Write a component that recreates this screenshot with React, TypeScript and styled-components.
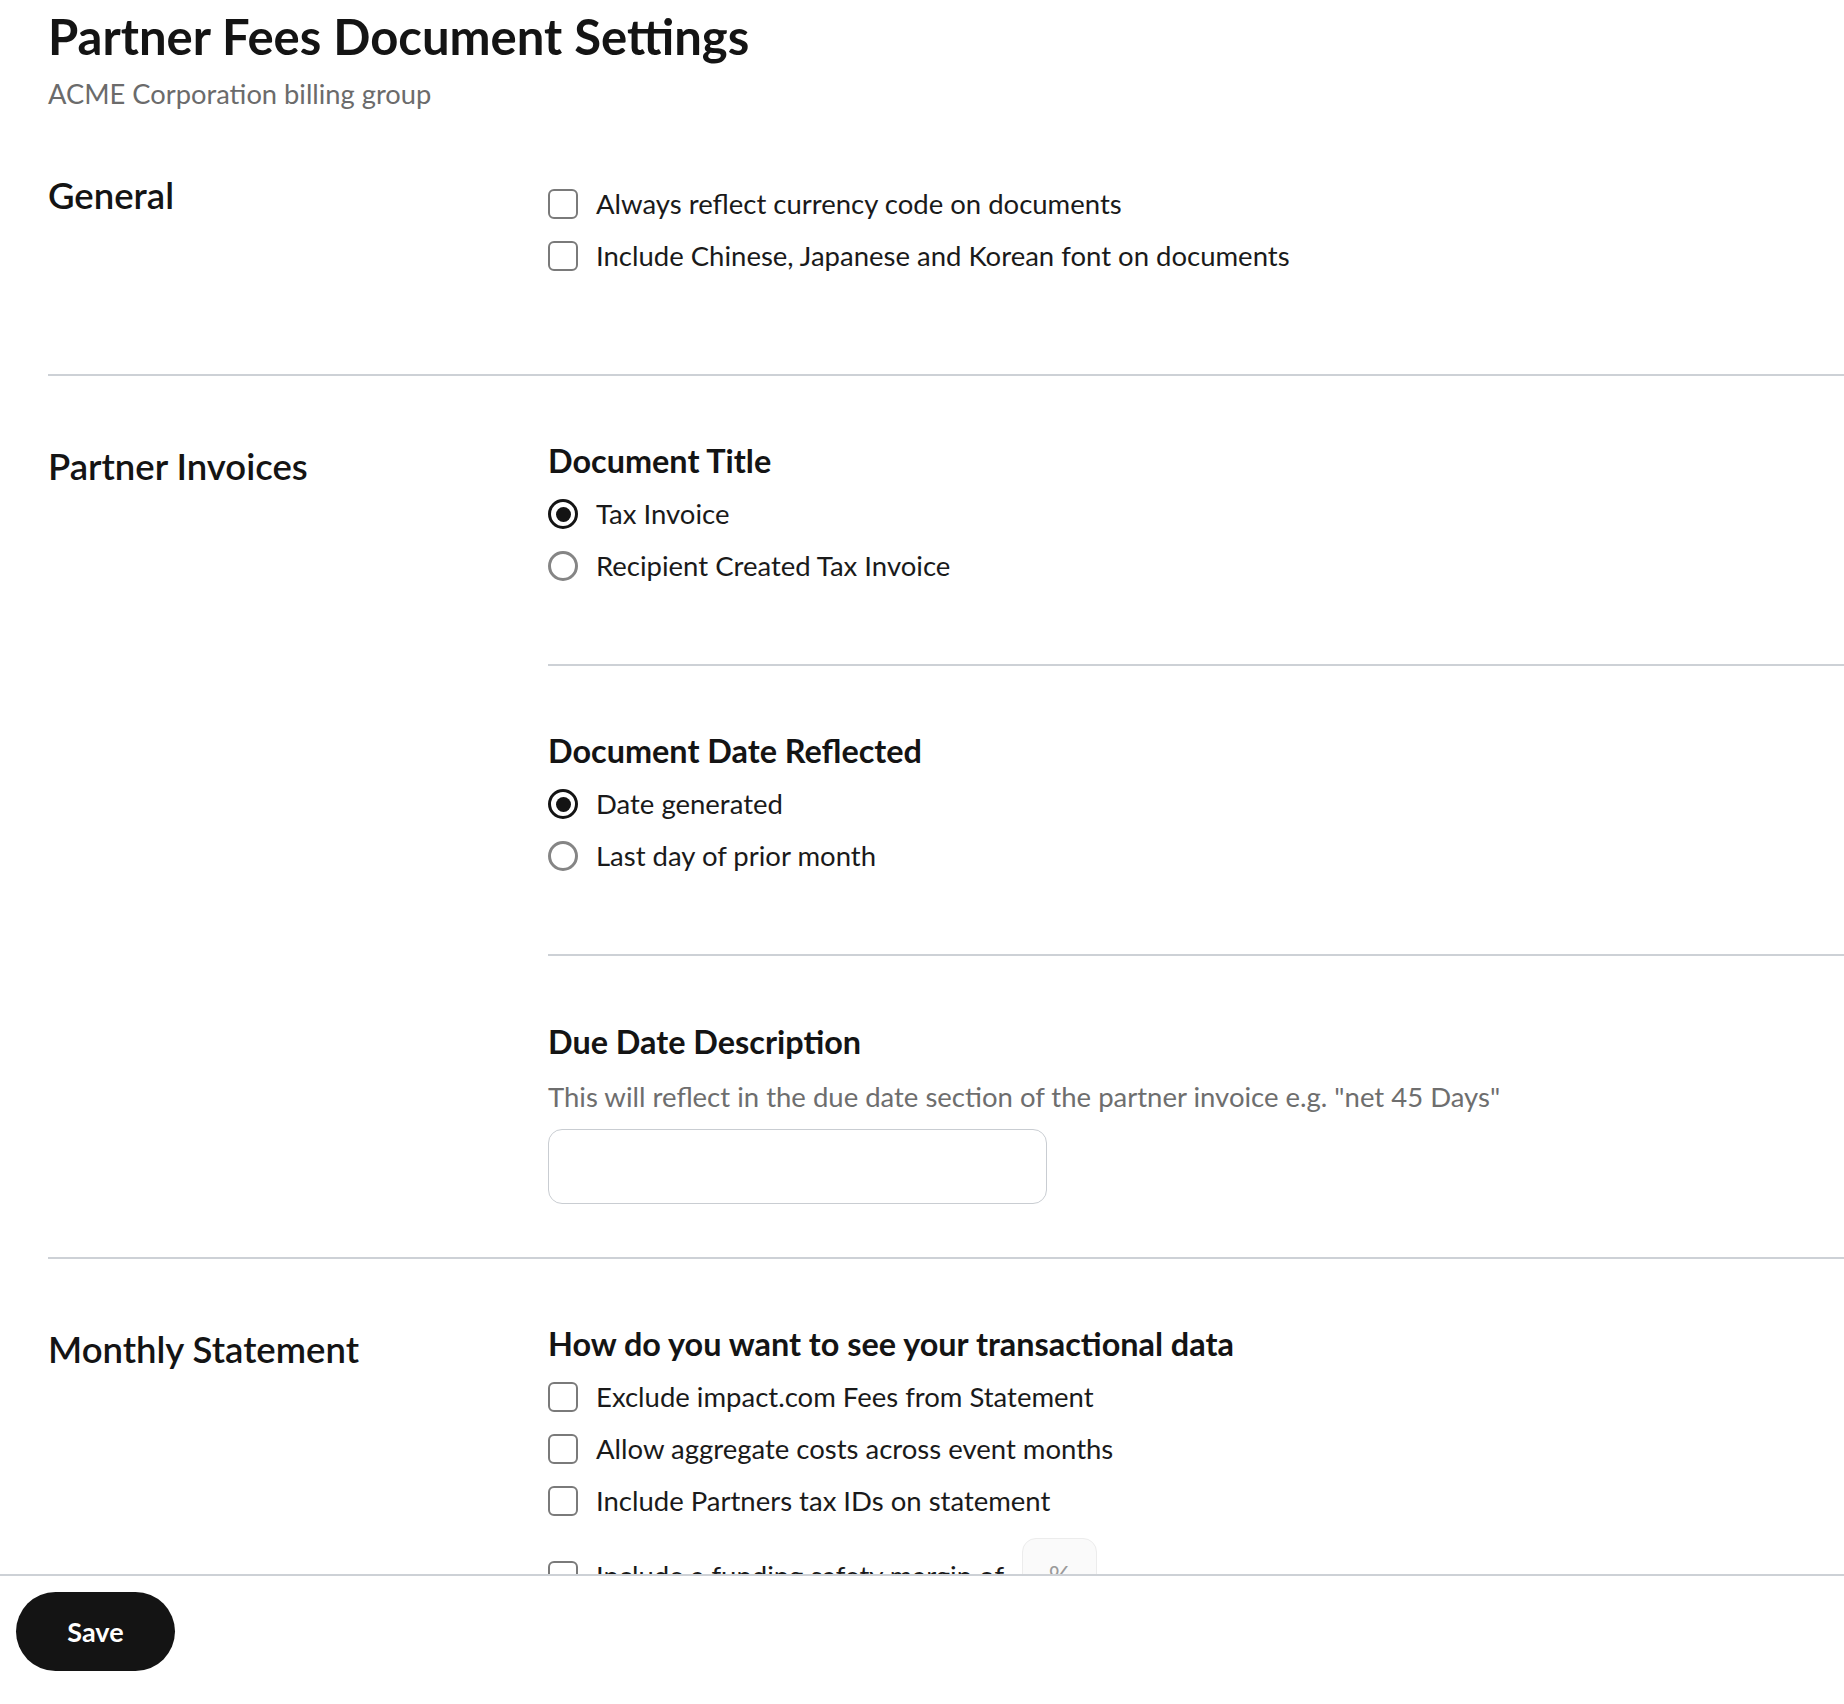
import styled, { createGlobalStyle } from "styled-components";

const GlobalStyle = createGlobalStyle`
  html, body {
    margin: 0;
    padding: 0;
    background: #ffffff;
  }
  body {
    font-family: Lato, "Noto Sans", sans-serif;
    color: #141414;
  }
  * {
    box-sizing: border-box;
  }
`;

const Shell = styled.div`
  height: 100vh;
  display: flex;
  flex-direction: column;
`;

const Scroll = styled.main`
  flex: 1;
  min-height: 0;
  overflow: hidden;
  padding-left: 48px;
`;

const Header = styled.header`
  padding-top: 10px;
`;

const Title = styled.h1`
  margin: 0;
  font-size: 49px;
  line-height: 52px;
  font-weight: 700;
`;

const Subtitle = styled.p`
  margin: 17px 0 0;
  font-size: 27.3px;
  line-height: 30px;
  color: #6b6b6b;
`;

const Section = styled.section`
  display: grid;
  grid-template-columns: 500px 1fr;
  border-bottom: 2px solid #cdd1d6;
`;

const SectionLabel = styled.h2<{ $top: number }>`
  margin: ${(p) => p.$top}px 0 0;
  font-size: 36.5px;
  line-height: 36px;
  font-weight: 600;
  align-self: start;
`;

const Column = styled.div`
  display: flex;
  flex-direction: column;
`;

const Block = styled.div<{ $top: number; $bottom: number; $divider?: boolean }>`
  padding: ${(p) => p.$top}px 0 ${(p) => p.$bottom}px;
  border-bottom: ${(p) => (p.$divider ? "2px solid #cdd1d6" : "none")};
`;

const BlockTitle = styled.h3`
  margin: 0;
  font-size: 32.4px;
  line-height: 36px;
  font-weight: 700;
`;

const Helper = styled.p`
  margin: 22px 0 0;
  font-size: 27.5px;
  line-height: 30px;
  color: #6e6e6e;
`;

const Options = styled.div<{ $top: number }>`
  margin-top: ${(p) => p.$top}px;
  display: flex;
  flex-direction: column;
  gap: 22px;
`;

const Option = styled.label`
  display: flex;
  align-items: center;
  gap: 18px;
  font-size: 27.5px;
  line-height: 30px;
  color: #1a1a1a;
  cursor: pointer;
`;

const Box = styled.span`
  flex: 0 0 30px;
  width: 30px;
  height: 30px;
  border: 2.5px solid #7a7a7a;
  border-radius: 6px;
  background: #ffffff;
`;

const Radio = styled.span<{ $on?: boolean }>`
  flex: 0 0 30px;
  width: 30px;
  height: 30px;
  border-radius: 50%;
  border: 3px solid ${(p) => (p.$on ? "#141414" : "#858585")};
  display: flex;
  align-items: center;
  justify-content: center;

  &::after {
    content: "";
    width: 15px;
    height: 15px;
    border-radius: 50%;
    background: ${(p) => (p.$on ? "#141414" : "transparent")};
  }
`;

const TextInput = styled.input`
  margin-top: 17px;
  width: 499px;
  height: 75px;
  border: 1.5px solid #c9cdd2;
  border-radius: 14px;
  padding: 0 20px;
  font: inherit;
  font-size: 27px;
  outline: none;
`;

const PercentField = styled.div`
  width: 75px;
  height: 75px;
  border: 1.5px solid #ececec;
  border-radius: 14px;
  background: #fafafa;
  color: #9a9a9a;
  font-size: 27px;
  display: flex;
  align-items: center;
  justify-content: center;
`;

const Footer = styled.footer`
  flex: 0 0 130px;
  border-top: 2px solid #cdd1d6;
  padding: 16px 16px 0;
  background: #ffffff;
`;

const SaveButton = styled.button`
  width: 159px;
  height: 79px;
  border: none;
  border-radius: 40px;
  background: #141414;
  color: #ffffff;
  font-family: inherit;
  font-size: 27px;
  font-weight: 700;
  cursor: pointer;
`;

function Check({ label }: { label: string }) {
  return (
    <Option>
      <Box role="checkbox" aria-checked="false" />
      {label}
    </Option>
  );
}

function RadioOption({ label, on }: { label: string; on?: boolean }) {
  return (
    <Option>
      <Radio role="radio" aria-checked={on ? "true" : "false"} $on={on} />
      {label}
    </Option>
  );
}

export default function App() {
  return (
    <>
      <GlobalStyle />
      <Shell>
        <Scroll>
          <Header>
            <Title>Partner Fees Document Settings</Title>
            <Subtitle>ACME Corporation billing group</Subtitle>
          </Header>

          <Section>
            <SectionLabel $top={68}>General</SectionLabel>
            <Column>
              <Block $top={80} $bottom={103}>
                <Options $top={0}>
                  <Check label="Always reflect currency code on documents" />
                  <Check label="Include Chinese, Japanese and Korean font on documents" />
                </Options>
              </Block>
            </Column>
          </Section>

          <Section>
            <SectionLabel $top={72}>Partner Invoices</SectionLabel>
            <Column>
              <Block $top={67} $bottom={83} $divider>
                <BlockTitle>Document Title</BlockTitle>
                <Options $top={20}>
                  <RadioOption label="Tax Invoice" on />
                  <RadioOption label="Recipient Created Tax Invoice" />
                </Options>
              </Block>
              <Block $top={67} $bottom={83} $divider>
                <BlockTitle>Document Date Reflected</BlockTitle>
                <Options $top={20}>
                  <RadioOption label="Date generated" on />
                  <RadioOption label="Last day of prior month" />
                </Options>
              </Block>
              <Block $top={68} $bottom={53}>
                <BlockTitle>Due Date Description</BlockTitle>
                <Helper>
                  This will reflect in the due date section of the partner invoice e.g. "net 45 Days"
                </Helper>
                <TextInput type="text" />
              </Block>
            </Column>
          </Section>

          <Section>
            <SectionLabel $top={72}>Monthly Statement</SectionLabel>
            <Column>
              <Block $top={67} $bottom={60}>
                <BlockTitle>How do you want to see your transactional data</BlockTitle>
                <Options $top={20}>
                  <Check label="Exclude impact.com Fees from Statement" />
                  <Check label="Allow aggregate costs across event months" />
                  <Check label="Include Partners tax IDs on statement" />
                  <Option>
                    <Box role="checkbox" aria-checked="false" />
                    Include a funding safety margin of
                    <PercentField>%</PercentField>
                  </Option>
                </Options>
              </Block>
            </Column>
          </Section>
        </Scroll>
        <Footer>
          <SaveButton type="button">Save</SaveButton>
        </Footer>
      </Shell>
    </>
  );
}
